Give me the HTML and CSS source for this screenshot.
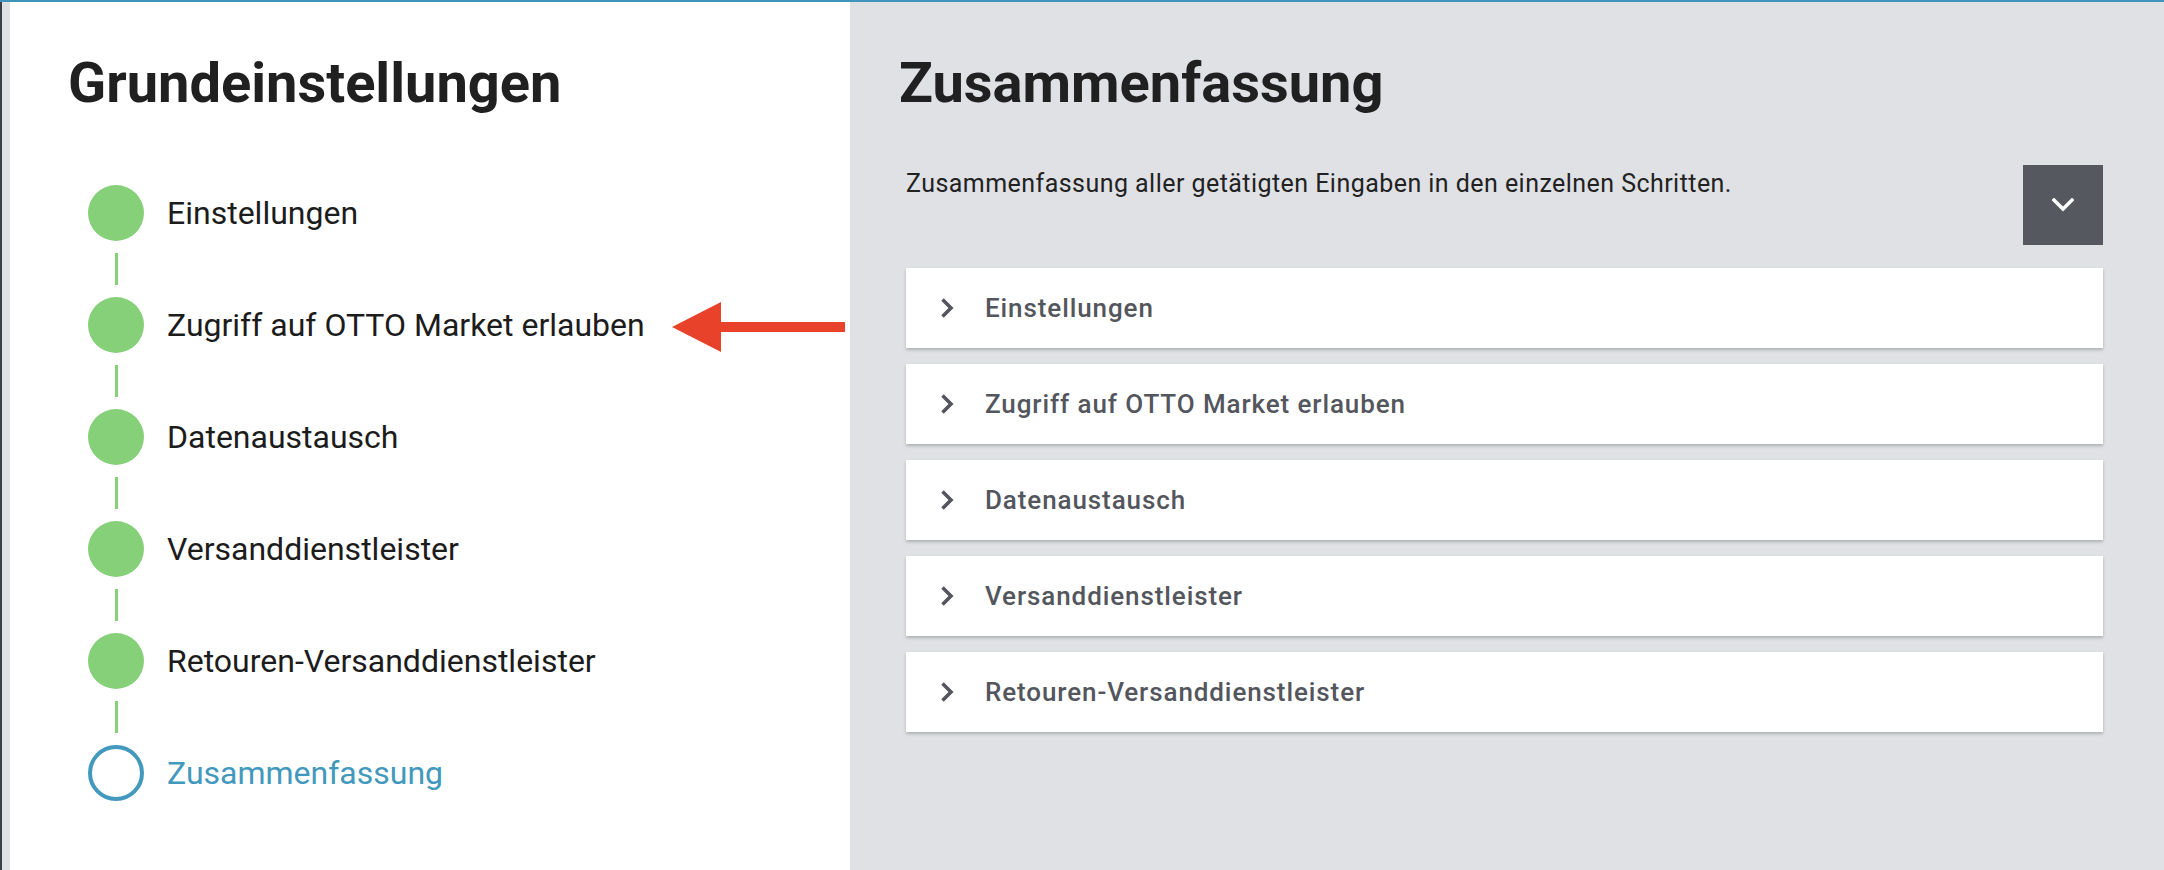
FILE: index.html
```html
<!DOCTYPE html>
<html lang="de">
<head>
<meta charset="utf-8">
<title>Grundeinstellungen</title>
<link rel="stylesheet" href="styles.css">
</head>
<body>
<div class="app">
  <div class="topbar"></div>
  <div class="main">
    <div class="edge"><div class="edge-dark"></div><div class="edge-light"></div></div>
    <aside class="sidebar">
      <h1 class="title">Grundeinstellungen</h1>
      <ol class="steps">
        <li class="step done"><span class="dot"></span><span class="label">Einstellungen</span></li>
        <li class="connector"><span class="line"></span></li>
        <li class="step done"><span class="dot"></span><span class="label">Zugriff auf OTTO Market erlauben</span></li>
        <li class="connector"><span class="line"></span></li>
        <li class="step done"><span class="dot"></span><span class="label">Datenaustausch</span></li>
        <li class="connector"><span class="line"></span></li>
        <li class="step done"><span class="dot"></span><span class="label">Versanddienstleister</span></li>
        <li class="connector"><span class="line"></span></li>
        <li class="step done"><span class="dot"></span><span class="label">Retouren-Versanddienstleister</span></li>
        <li class="connector"><span class="line"></span></li>
        <li class="step current"><span class="dot"></span><span class="label">Zusammenfassung</span></li>
      </ol>
    </aside>
    <section class="content">
      <h1 class="title content-title">Zusammenfassung</h1>
      <div class="intro">
        <p class="intro-text">Zusammenfassung aller getätigten Eingaben in den einzelnen Schritten.</p>
        <button class="toggle" type="button" aria-label="Alle aufklappen">
          <svg width="22" height="14" viewBox="0 0 22 14"><polyline points="2,2 11,11 20,2" fill="none" stroke="#ffffff" stroke-width="3.4" stroke-linecap="square"/></svg>
        </button>
      </div>
      <div class="panels">
        <div class="panel"><svg class="chev" width="14" height="22" viewBox="0 0 14 22"><polyline points="2.5,2.5 11,11 2.5,19.5" fill="none" stroke="#54565e" stroke-width="3.6"/></svg><span class="panel-label">Einstellungen</span></div>
        <div class="panel"><svg class="chev" width="14" height="22" viewBox="0 0 14 22"><polyline points="2.5,2.5 11,11 2.5,19.5" fill="none" stroke="#54565e" stroke-width="3.6"/></svg><span class="panel-label">Zugriff auf OTTO Market erlauben</span></div>
        <div class="panel"><svg class="chev" width="14" height="22" viewBox="0 0 14 22"><polyline points="2.5,2.5 11,11 2.5,19.5" fill="none" stroke="#54565e" stroke-width="3.6"/></svg><span class="panel-label">Datenaustausch</span></div>
        <div class="panel"><svg class="chev" width="14" height="22" viewBox="0 0 14 22"><polyline points="2.5,2.5 11,11 2.5,19.5" fill="none" stroke="#54565e" stroke-width="3.6"/></svg><span class="panel-label">Versanddienstleister</span></div>
        <div class="panel"><svg class="chev" width="14" height="22" viewBox="0 0 14 22"><polyline points="2.5,2.5 11,11 2.5,19.5" fill="none" stroke="#54565e" stroke-width="3.6"/></svg><span class="panel-label">Retouren-Versanddienstleister</span></div>
      </div>
    </section>
  </div>
  <svg class="annotation" width="190" height="60" viewBox="0 0 190 60">
    <polygon points="7,30 56,5 56,25 180,25 180,35 56,35 56,55" fill="#e8432a"/>
  </svg>
</div>
</body>
</html>
```

FILE: styles.css
```css
* { box-sizing: border-box; }
html, body {
  margin: 0;
  padding: 0;
  width: 2164px;
  height: 870px;
  overflow: hidden;
  font-family: Roboto, "Liberation Sans", Arial, sans-serif;
}
.app {
  position: relative;
  width: 2164px;
  height: 870px;
  display: flex;
  flex-direction: column;
  background: #dfe1e5;
}
.topbar {
  height: 2px;
  background: #3f94bb;
  flex: none;
}
.main {
  flex: 1;
  display: flex;
}
.edge {
  width: 10px;
  display: flex;
  flex: none;
}
.edge-dark { width: 2px; background: #3b3e45; }
.edge-light { width: 8px; background: #dfe1e5; }
.sidebar {
  width: 840px;
  flex: none;
  background: #ffffff;
  padding: 53px 0 0 58px;
}
.title {
  margin: 0;
  font-size: 56px;
  line-height: 56px;
  font-weight: 700;
  color: #202020;
}
.steps {
  list-style: none;
  margin: 74px 0 0 20px;
  padding: 0;
}
.step {
  display: flex;
  align-items: center;
  height: 56px;
  gap: 23px;
}
.dot {
  width: 56px;
  height: 56px;
  border-radius: 50%;
  flex: none;
}
.done .dot { background: #87d07a; }
.current .dot { border: 4px solid #4298bd; background: #ffffff; }
.label {
  font-size: 32px;
  line-height: 38px;
  color: #1c1c1c;
}
.current .label { color: #4298bd; }
.connector {
  height: 56px;
  width: 56px;
  display: flex;
  justify-content: center;
  padding: 12px 0;
}
.line {
  width: 3px;
  height: 32px;
  background: #87d07a;
}
.content {
  flex: 1;
  padding: 53px 61px 0 56px;
}
.content-title { margin-left: -7px; }
.intro {
  margin-top: 54px;
  display: flex;
  justify-content: space-between;
  align-items: flex-start;
}
.intro-text {
  margin: 0;
  padding-top: 5px;
  font-size: 25px;
  line-height: 28px;
  letter-spacing: 0.45px;
  color: #222222;
}
.toggle {
  width: 80px;
  height: 80px;
  border: 0;
  padding: 0;
  background: #55585f;
  display: flex;
  align-items: center;
  justify-content: center;
}
.panels {
  margin-top: 23px;
  display: flex;
  flex-direction: column;
  gap: 16px;
}
.panel {
  height: 80px;
  background: #ffffff;
  box-shadow: 0 2px 3px rgba(0, 0, 0, 0.22);
  display: flex;
  align-items: center;
  padding-left: 34px;
  gap: 31px;
}
.chev { flex: none; }
.panel-label {
  font-size: 26px;
  font-weight: 500;
  letter-spacing: 0.9px;
  color: #54565e;
}
.annotation {
  position: absolute;
  left: 665px;
  top: 297px;
}
```
